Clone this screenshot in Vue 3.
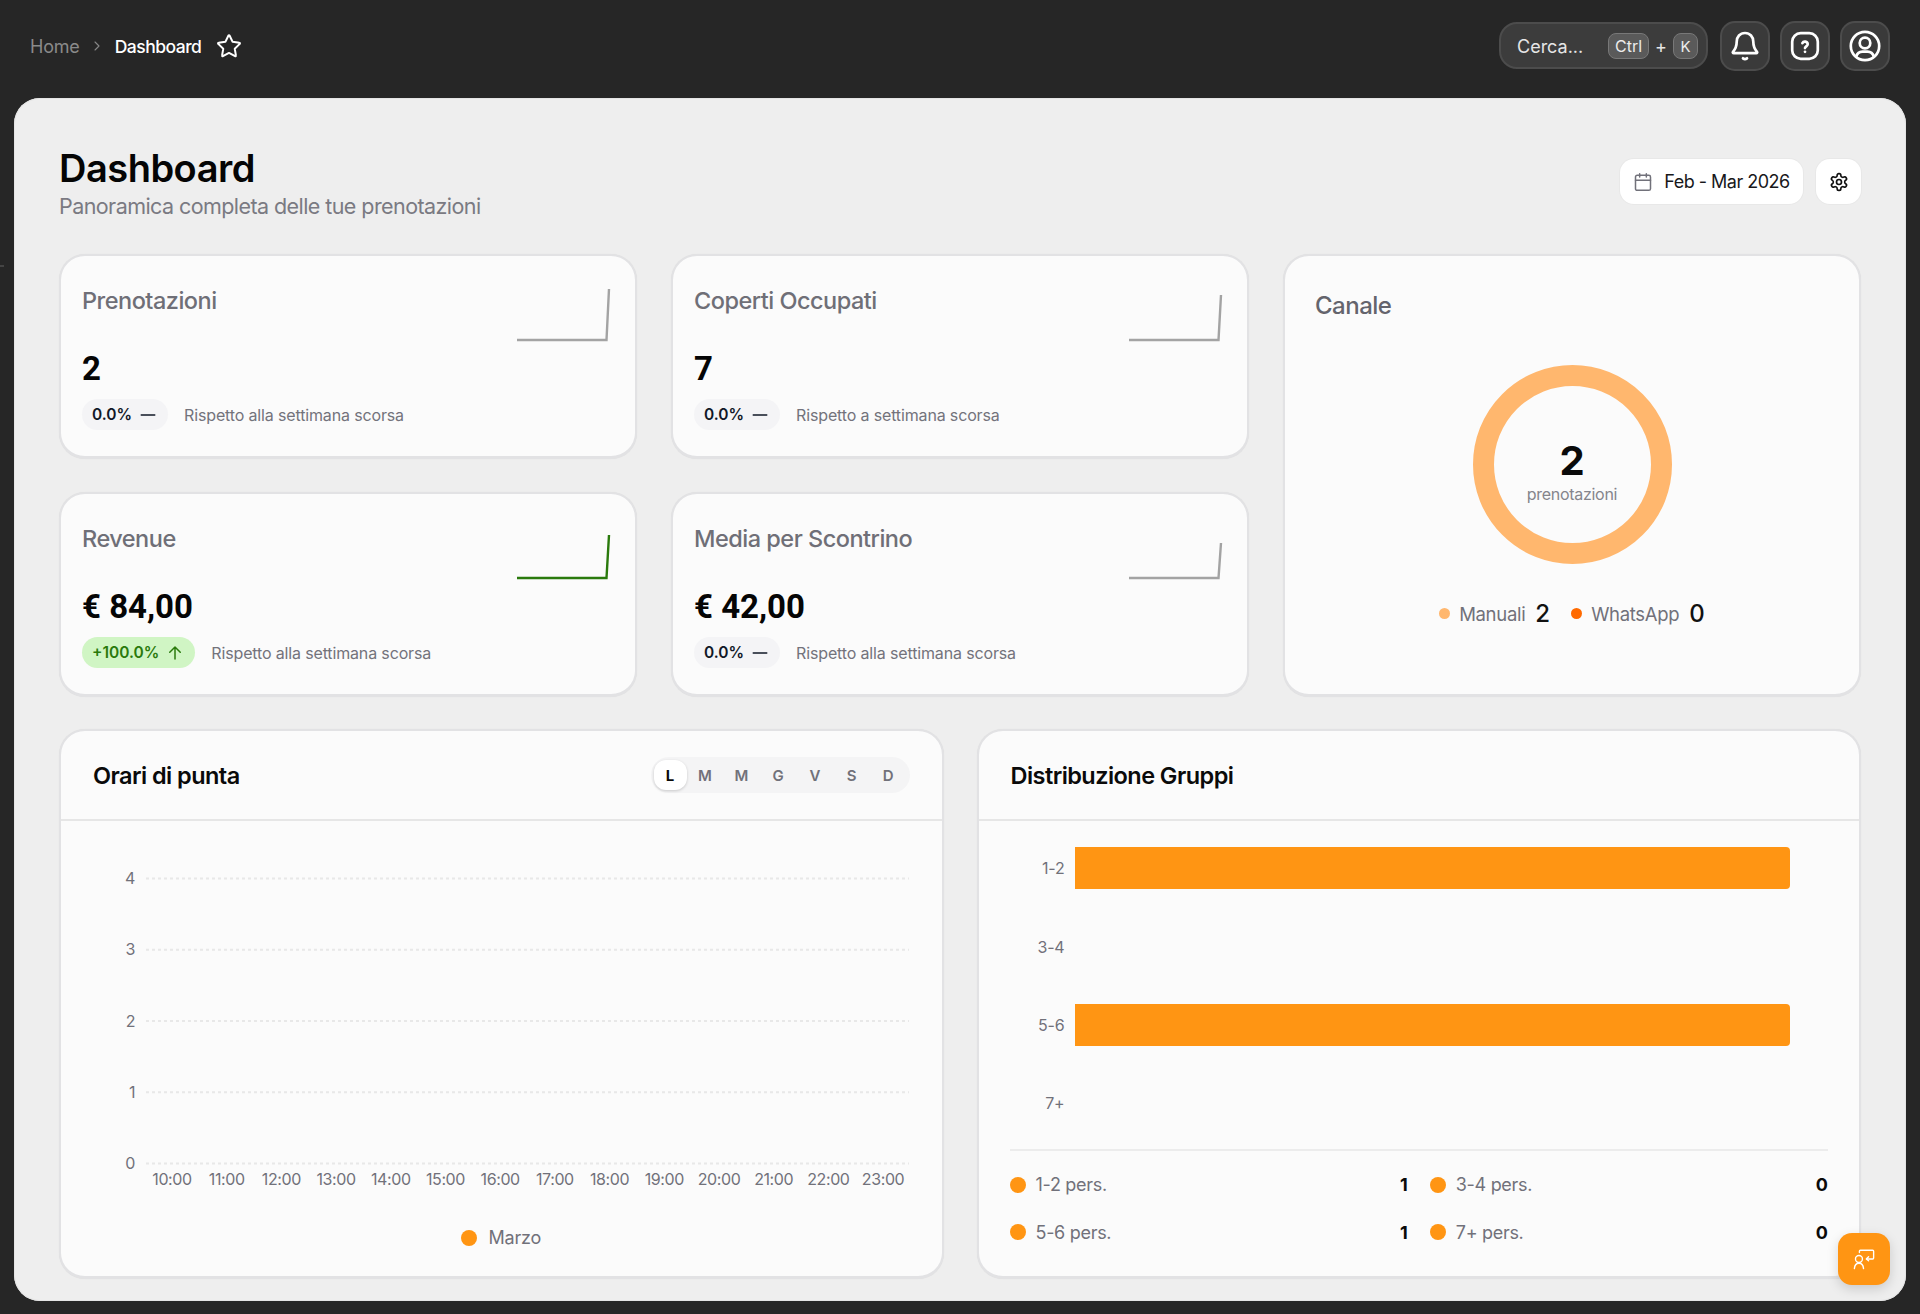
<script setup>
const kpis = [
  { title: 'Prenotazioni', value: '2', pct: '0.0%', note: 'Rispetto alla settimana scorsa', h: 52, up: false },
  { title: 'Coperti Occupati', value: '7', pct: '0.0%', note: 'Rispetto a settimana scorsa', h: 46, up: false },
  { title: 'Revenue', value: '€ 84,00', pct: '+100.0%', note: 'Rispetto alla settimana scorsa', h: 44, up: true },
  { title: 'Media per Scontrino', value: '€ 42,00', pct: '0.0%', note: 'Rispetto alla settimana scorsa', h: 36, up: false },
]
const days = ['L', 'M', 'M', 'G', 'V', 'S', 'D']
const yTicks = [4, 3, 2, 1, 0]
const hours = ['10:00','11:00','12:00','13:00','14:00','15:00','16:00','17:00','18:00','19:00','20:00','21:00','22:00','23:00']
const bars = [
  { label: '1-2', w: 100 },
  { label: '3-4', w: 0 },
  { label: '5-6', w: 100 },
  { label: '7+', w: 0 },
]
const groups = [
  { label: '1-2 pers.', n: 1 },
  { label: '3-4 pers.', n: 0 },
  { label: '5-6 pers.', n: 1 },
  { label: '7+ pers.', n: 0 },
]
</script>

<template>
  <div class="app">
    <span class="edge-tick"></span>
    <header class="topbar">
      <nav class="crumbs">
        <span class="crumb-home">Home</span>
        <svg class="chev" viewBox="0 0 24 24" fill="none" stroke="currentColor" stroke-width="1.6" stroke-linecap="round" stroke-linejoin="round"><path d="m9 18 6-6-6-6"/></svg>
        <span class="crumb-cur">Dashboard</span>
        <svg class="star" viewBox="0 0 24 24" fill="none" stroke="#fff" stroke-width="1.8" stroke-linecap="round" stroke-linejoin="round"><path d="M11.5 2.3a.55.55 0 0 1 1 0l2.8 5.8 6.3.9a.55.55 0 0 1 .3 1l-4.6 4.5 1.1 6.3a.55.55 0 0 1-.8.6L12 18.4l-5.6 3a.55.55 0 0 1-.8-.6l1.1-6.3L2.1 10a.55.55 0 0 1 .3-1l6.3-.9z"/></svg>
      </nav>
      <div class="tools">
        <div class="search">
          <span class="search-label">Cerca...</span>
          <span class="keys">
            <kbd class="kbd kbd-ctrl">Ctrl</kbd>
            <span class="plus">+</span>
            <kbd class="kbd kbd-k">K</kbd>
          </span>
        </div>
        <button class="tool-btn">
          <svg viewBox="0 0 32 32" fill="none" stroke="#fff" stroke-width="2.7" stroke-linecap="round" stroke-linejoin="round"><path d="M16 3c-5 0-8.300 3.800-8.300 8.800 0 5.700-1.500 7.600-3.700 10-.5.6-.1 1.400.7 1.400h22.600c.8 0 1.200-.8.700-1.400-2.200-2.400-3.700-4.300-3.700-10C24.300 6.800 21 3 16 3z"/><path d="M14 28.300c1.200.9 2.800.9 4 0"/></svg>
        </button>
        <button class="tool-btn">
          <svg viewBox="0 0 32 32" fill="none" stroke="#fff" stroke-width="2.7" stroke-linecap="round" stroke-linejoin="round"><rect x="3.200" y="3.200" width="25.600" height="25.600" rx="8.500"/><path d="M13.400 13.200a2.800 2.800 0 0 1 5.300 1c0 1.900-2.700 2.300-2.700 3.900"/><path d="M16 21.800h.02"/></svg>
        </button>
        <button class="tool-btn">
          <svg viewBox="0 0 32 32" fill="none" stroke="#fff" stroke-width="2.7" stroke-linecap="round" stroke-linejoin="round"><circle cx="16" cy="16" r="14.200"/><circle cx="16" cy="13" r="5.300"/><path d="M7.300 26.400a6.500 6.500 0 0 1 6.200-4.800h5a6.500 6.500 0 0 1 6.200 4.800"/></svg>
        </button>
      </div>
    </header>

    <main class="panel">
      <section class="page-head">
        <div>
          <h1 class="page-title">Dashboard</h1>
          <p class="page-sub">Panoramica completa delle tue prenotazioni</p>
        </div>
        <div class="head-actions">
          <button class="date-btn">
            <svg class="cal" viewBox="0 0 24 24" fill="none" stroke="#71717a" stroke-width="1.800" stroke-linecap="round" stroke-linejoin="round"><path d="M8 2v4M16 2v4"/><rect x="3" y="4" width="18" height="18" rx="2"/><path d="M3 10h18"/></svg>
            <span>Feb - Mar 2026</span>
          </button>
          <button class="gear-btn">
            <svg viewBox="0 0 24 24" fill="none" stroke="#111" stroke-width="2" stroke-linecap="round" stroke-linejoin="round"><path d="M12.220 2h-.44a2 2 0 0 0-2 2v.18a2 2 0 0 1-1 1.730l-.43.250a2 2 0 0 1-2 0l-.15-.08a2 2 0 0 0-2.730.730l-.22.380a2 2 0 0 0 .730 2.730l.15.100a2 2 0 0 1 1 1.720v.510a2 2 0 0 1-1 1.740l-.15.090a2 2 0 0 0-.730 2.730l.22.380a2 2 0 0 0 2.730.730l.15-.08a2 2 0 0 1 2 0l.43.250a2 2 0 0 1 1 1.730V20a2 2 0 0 0 2 2h.44a2 2 0 0 0 2-2v-.18a2 2 0 0 1 1-1.730l.43-.250a2 2 0 0 1 2 0l.15.080a2 2 0 0 0 2.730-.730l.22-.390a2 2 0 0 0-.730-2.730l-.15-.080a2 2 0 0 1-1-1.740v-.500a2 2 0 0 1 1-1.740l.15-.090a2 2 0 0 0 .730-2.730l-.22-.380a2 2 0 0 0-2.730-.730l-.15.080a2 2 0 0 1-2 0l-.43-.250a2 2 0 0 1-1-1.730V4a2 2 0 0 0-2-2z"/><circle cx="12" cy="12" r="3"/></svg>
          </button>
        </div>
      </section>

      <section class="top-grid">
        <article v-for="k in kpis" :key="k.title" class="card kpi">
          <div class="kpi-top">
            <h3 class="kpi-title">{{ k.title }}</h3>
            <svg class="spark" :style="{ height: k.h + 'px' }" :viewBox="`0 0 92 ${k.h}`" preserveAspectRatio="none" fill="none" :stroke="k.up ? '#2a7a0c' : '#a3a3a3'" stroke-width="2.400"><path :d="`M0 ${k.h - 1}H89.500L92 0`"/></svg>
          </div>
          <div class="kpi-value">{{ k.value }}</div>
          <div class="kpi-foot">
            <span class="badge" :class="{ 'badge-up': k.up }">
              {{ k.pct }}
              <svg v-if="k.up" viewBox="0 0 24 24" fill="none" stroke="currentColor" stroke-width="2" stroke-linecap="round" stroke-linejoin="round"><path d="M12 20V4M5 11l7-7 7 7"/></svg>
              <svg v-else viewBox="0 0 24 24" fill="none" stroke="currentColor" stroke-width="2" stroke-linecap="round"><path d="M3 12h18"/></svg>
            </span>
            <span class="kpi-note">{{ k.note }}</span>
          </div>
        </article>

        <article class="card channel">
          <h3 class="channel-title">Canale</h3>
          <div class="donut">
            <div class="donut-value">2</div>
            <div class="donut-label">prenotazioni</div>
          </div>
          <div class="channel-legend">
            <span class="dot dot-soft"></span><span class="ch-name">Manuali</span><span class="ch-num ch-gap">2</span>
            <span class="dot dot-hot"></span><span class="ch-name">WhatsApp</span><span class="ch-num">0</span>
          </div>
        </article>
      </section>

      <section class="bottom-grid">
        <article class="card big">
          <header class="big-head">
            <h3 class="big-title">Orari di punta</h3>
            <div class="days">
              <span v-for="(d, i) in days" :key="i" class="day" :class="{ 'day-on': i === 0 }">{{ d }}</span>
            </div>
          </header>
          <svg class="line-chart" viewBox="0 0 881 372" width="881" height="372">
            <g v-for="(t, i) in yTicks" :key="t">
              <line x1="85" x2="848" :y1="57.5 + i * 71.250" :y2="57.5 + i * 71.250" stroke="#e8e8e8" stroke-width="1.800" stroke-dasharray="3 3"/>
              <text x="74" :y="63 + i * 71.250" text-anchor="end" class="axis">{{ t }}</text>
            </g>
            <text v-for="(h, i) in hours" :key="h" :x="111 + i * 54.700" y="364" text-anchor="middle" class="axis">{{ h }}</text>
          </svg>
          <div class="marzo"><span class="dot-lg"></span>Marzo</div>
        </article>

        <article class="card big">
          <header class="big-head">
            <h3 class="big-title">Distribuzione Gruppi</h3>
          </header>
          <div class="bars">
            <div v-for="b in bars" :key="b.label" class="bar-row">
              <span class="bar-label">{{ b.label }}</span>
              <div class="bar-track">
                <div class="bar-fill" :style="{ width: b.w + '%' }"></div>
              </div>
            </div>
          </div>
          <div class="groups">
            <div v-for="g in groups" :key="g.label" class="group">
              <span class="dot-lg"></span>
              <span class="group-label">{{ g.label }}</span>
              <span class="group-num">{{ g.n }}</span>
            </div>
          </div>
        </article>
      </section>
    </main>

    <button class="fab">
      <svg viewBox="0 0 24 24" fill="none" stroke="#fff" stroke-width="1.500" stroke-linecap="round" stroke-linejoin="round"><circle cx="6.500" cy="12" r="3.800"/><path d="M1.500 22.500c.3-3.700 2.200-5.800 5-5.800s4.700 2.100 5 5.800"/><path d="M7 5V3.500a1 1 0 0 1 1-1h13.500a1 1 0 0 1 1 1V11a1 1 0 0 1-1 1H15"/><path d="M17 9.500 14.500 12l2.500 2"/></svg>
    </button>
  </div>
</template>

<style scoped>
.app {
  position: relative;
  width: 1920px;
  height: 1314px;
  background: #262626;
  font-family: Inter, "Liberation Sans", sans-serif;
  color: #0a0a0a;
  overflow: hidden;
}
.edge-tick {
  position: absolute;
  left: 0;
  top: 265px;
  width: 4px;
  height: 2px;
  background: #444;
}
h1, h3, p { margin: 0; }
button { font: inherit; cursor: pointer; }

.topbar {
  height: 98px;
  padding: 0 30px 7px 30px;
  box-sizing: border-box;
  display: flex;
  align-items: center;
  justify-content: space-between;
}
.crumbs { display: flex; align-items: center; margin-top: 1px; }
.crumb-home { font-size: 18px; color: #8a8a8a; letter-spacing: -0.2px; }
.chev { width: 16px; height: 16px; color: #888; margin: 0 10px 0 9px; }
.crumb-cur { font-size: 17.500px; font-weight: 500; color: #fff; letter-spacing: -0.5px; }
.star { width: 26px; height: 26px; margin-left: 15px; }
.tools { display: flex; align-items: center; gap: 10px; }
.search {
  width: 209px;
  height: 47px;
  box-sizing: border-box;
  border: 2.500px solid #4c4c4c;
  border-radius: 18px;
  background: #3c3c3c;
  padding: 1px 8px 0 16px;
  display: flex;
  align-items: center;
  justify-content: space-between;
  color: #e6e6e6;
  margin-right: 2px;
}
.search-label { font-size: 18px; }
.keys { display: flex; align-items: center; }
.plus { font-size: 18px; margin: 0 6px 0 6px; }
.kbd {
  font-family: inherit;
  font-size: 16px;
  height: 26px;
  box-sizing: border-box;
  border: 1.500px solid #787878;
  border-radius: 8px;
  background: #5a5a5a;
  display: flex;
  align-items: center;
  justify-content: center;
  color: #ececec;
}
.kbd-ctrl { width: 41px; }
.kbd-k { width: 25px; font-size: 15px; }
.tool-btn {
  width: 50px;
  height: 50px;
  box-sizing: border-box;
  border: 2.500px solid #4c4c4c;
  border-radius: 15px;
  background: #3a3a3a;
  padding: 0;
  display: flex;
  align-items: center;
  justify-content: center;
}
.tool-btn svg { width: 32px; height: 32px; }

.panel {
  margin: 0 14px;
  height: 1203px;
  box-sizing: border-box;
  background: #eeeeee;
  border-radius: 26px;
  padding: 47px 45px 0 45px;
  box-shadow: inset 0 0 0 1px #e4e4e4;
}
.page-head {
  display: flex;
  justify-content: space-between;
  align-items: flex-start;
  height: 109px;
}
.page-title { font-size: 38px; font-weight: 600; line-height: 46px; letter-spacing: -0.500px; color: #050505; }
.page-sub { font-size: 21.500px; line-height: 28px; color: #7a7a82; letter-spacing: -0.570px; margin-top: 1px; }
.head-actions { display: flex; gap: 13px; margin-top: 14px; }
.date-btn {
  height: 45px;
  width: 183px;
  border: 0;
  border-radius: 14px;
  background: #fff;
  box-shadow: 0 0 0 1px #e8e8e8;
  display: flex;
  align-items: center;
  justify-content: center;
  gap: 11px;
  font-size: 18px;
  color: #18181b;
  letter-spacing: -0.500px;
  padding: 0;
}
.cal { width: 20px; height: 20px; }
.gear-btn {
  width: 45px;
  height: 45px;
  border: 0;
  border-radius: 14px;
  background: #fff;
  box-shadow: 0 0 0 1px #e8e8e8;
  display: flex;
  align-items: center;
  justify-content: center;
  padding: 0;
}
.gear-btn svg { width: 20px; height: 20px; }

.card {
  box-sizing: border-box;
  background: #fbfbfb;
  border: 2.500px solid #e2e2e4;
  border-bottom-width: 3.500px;
  border-radius: 26px;
  box-shadow: 0 0 1px rgba(0, 0, 0, 0.08);
}
.top-grid {
  display: grid;
  grid-template-columns: repeat(3, 1fr);
  grid-template-rows: 205px 205px;
  gap: 33px 34px;
  height: 443px;
}
.channel { grid-column: 3; grid-row: 1 / span 2; }
.kpi { padding: 0 21px; position: relative; }
.kpi-top { display: flex; justify-content: space-between; align-items: flex-start; height: 88px; }
.kpi-title { font-size: 23.500px; font-weight: 500; color: #6f6f77; letter-spacing: -0.500px; line-height: 30px; margin-top: 30px; }
.spark { width: 92px; position: absolute; right: 26px; bottom: 115px; overflow: visible; }
.kpi-value { font-family: Roboto, Inter, sans-serif; font-size: 33px; font-weight: 700; line-height: 40px; margin-top: 5px; color: #050505; }
.kpi-foot { display: flex; align-items: center; gap: 16px; margin-top: 10px; }
.badge {
  height: 31px;
  padding: 0 11px 0 10px;
  border-radius: 16px;
  background: #f4f4f6;
  color: #111827;
  font-size: 15.500px;
  font-weight: 600;
  display: inline-flex;
  align-items: center;
  gap: 7px;
}
.badge svg { width: 18px; height: 18px; }
.badge-up { background: #d0f5c4; color: #2a7a0c; }
.kpi-note { font-size: 16px; color: #73737b; letter-spacing: -0.150px; }

.channel { padding: 0 30px; display: flex; flex-direction: column; align-items: stretch; }
.channel-title { font-size: 24px; font-weight: 500; color: #64646c; letter-spacing: -0.500px; margin-top: 35px; line-height: 30px; }
.donut {
  width: 199px;
  height: 199px;
  box-sizing: border-box;
  border: 21px solid #ffb76e;
  border-radius: 50%;
  align-self: center;
  margin-top: 44px;
  display: flex;
  flex-direction: column;
  align-items: center;
  justify-content: center;
}
.donut-value { font-size: 40px; font-weight: 700; line-height: 44px; margin-top: 14px; }
.donut-label { font-size: 16px; color: #85858c; letter-spacing: -0.300px; line-height: 22px; }
.channel-legend { display: flex; align-items: center; justify-content: center; margin-top: 35px; font-size: 18.500px; }
.dot { width: 11px; height: 11px; border-radius: 50%; margin-right: 9px; }
.dot-soft { background: #ffb76e; }
.dot-hot { background: #ff6a00; }
.ch-name { color: #71717a; letter-spacing: -0.300px; }
.ch-num { font-size: 24px; font-weight: 500; margin-left: 10px; color: #111; }
.ch-gap { margin-right: 21px; }

.bottom-grid {
  display: grid;
  grid-template-columns: 1fr 1fr;
  gap: 33px;
  margin-top: 32px;
  height: 550px;
}
.big { overflow: hidden; display: flex; flex-direction: column; }
.big-head {
  height: 90px;
  flex: none;
  box-sizing: border-box;
  border-bottom: 2px solid #e6e6e6;
  padding: 0 32px;
  display: flex;
  align-items: center;
  justify-content: space-between;
}
.big-title { font-size: 23.500px; font-weight: 600; letter-spacing: -0.550px; color: #0a0a0a; }
.days {
  display: flex;
  width: 259px;
  height: 36px;
  box-sizing: border-box;
  padding: 3px;
  background: #f4f4f5;
  border-radius: 18px;
}
.day {
  flex: 1;
  display: flex;
  align-items: center;
  justify-content: center;
  font-size: 15px;
  font-weight: 600;
  color: #71717a;
}
.day-on { flex: none; width: 33px; background: #fff; color: #0a0a0a; border-radius: 12px; box-shadow: 0 1px 3px rgba(0, 0, 0, 0.18); font-weight: 700; }
.line-chart { display: block; flex: none; }
.axis { font-size: 16px; fill: #71717a; font-family: Inter, sans-serif; letter-spacing: -0.400px; }
.marzo {
  display: flex;
  align-items: center;
  justify-content: center;
  gap: 11px;
  font-size: 18px;
  color: #71717a;
  margin-top: 34px;
  letter-spacing: -0.200px;
}
.dot-lg { width: 16px; height: 16px; border-radius: 50%; background: #ff9513; flex: none; }

.bars { margin: 8px 69px 0 0; height: 320px; display: flex; flex-direction: column; flex: none; }
.bar-row { height: 78.400px; display: flex; align-items: center; flex: none; }
.bar-label { width: 86px; text-align: right; font-size: 16px; color: #71717a; letter-spacing: -0.200px; }
.bar-track { flex: 1; margin-left: 10px; height: 42px; }
.bar-fill { height: 100%; background: #ff9513; border-radius: 0 4px 4px 0; }
.groups {
  margin: 0 31px;
  border-top: 2px solid #ececec;
  padding-top: 10px;
  display: grid;
  grid-template-columns: 1fr 1fr;
  column-gap: 22px;
}
.group { display: flex; align-items: center; height: 47.500px; font-size: 18px; }
.group-label { color: #71717a; margin-left: 10px; flex: 1; letter-spacing: -0.300px; }
.group-num { font-weight: 700; color: #0a0a0a; }

.fab {
  position: absolute;
  left: 1838px;
  top: 1233px;
  width: 52px;
  height: 52px;
  border: 0;
  border-radius: 14px;
  background: #ff9513;
  box-shadow: 0 4px 12px rgba(0, 0, 0, 0.15);
  padding: 0;
  display: flex;
  align-items: center;
  justify-content: center;
}
.fab svg { width: 22px; height: 22px; }
</style>
